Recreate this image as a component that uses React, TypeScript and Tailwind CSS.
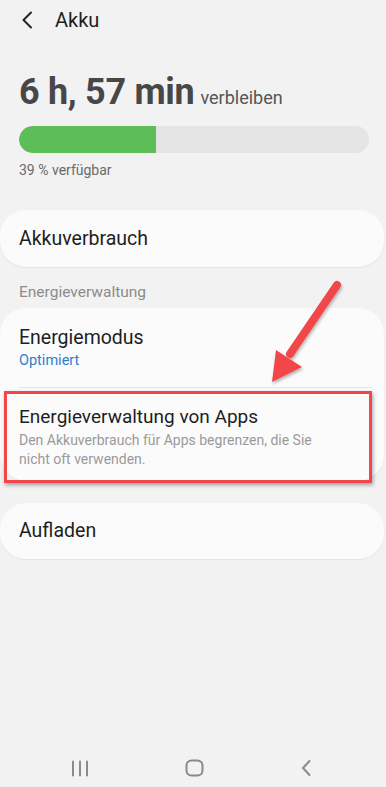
import React from 'react';

const font = { fontFamily: 'Roboto, "Noto Sans", sans-serif' };

export default function App() {
  return (
    <div className="relative w-[386px] h-[787px] bg-[#f2f2f2] overflow-hidden flex flex-col" style={font}>
      {/* header */}
      <div className="flex items-center h-[40px] pl-[21px]">
        <svg width="12" height="18" viewBox="0 0 12 18" className="text-[#222]">
          <path d="M10 1.5 L2.5 9 L10 16.5" fill="none" stroke="currentColor" strokeWidth="2" strokeLinecap="round" strokeLinejoin="round" />
        </svg>
        <span className="ml-[22px] text-[20px] leading-[28px] text-[#1e1e1e]">Akku</span>
      </div>

      {/* remaining time */}
      <div className="pl-[19px] pr-[17px] mt-[32px]">
        <div className="flex items-baseline">
          <span className="text-[36px] leading-[40px] font-bold text-[#474747] tracking-[-0.3px]">6 h, 57 min</span>
          <span className="ml-[6px] text-[18px] text-[#555]">verbleiben</span>
        </div>
        <div className="mt-[14px] h-[27px] rounded-full bg-[#e4e4e4] overflow-hidden">
          <div className="h-full bg-[#5dbd56] rounded-l-full" style={{ width: '39%' }} />
        </div>
        <div className="mt-[8px] text-[14px] leading-[18px] text-[#6a6a6a]">39 % verfügbar</div>
      </div>

      {/* Akkuverbrauch */}
      <div className="mt-[31px] mr-[2px] h-[57px] rounded-[26px] bg-[#fbfbfc] shadow-[0_1px_1px_rgba(0,0,0,0.06)] flex items-center px-[19px]">
        <span className="text-[19.5px] text-[#1e1e1e]">Akkuverbrauch</span>
      </div>

      <div className="mt-[15px] px-[19px] text-[15.5px] leading-[20px] text-[#8c8c8c]">Energieverwaltung</div>

      {/* Energie card */}
      <div className="mt-[6px] mr-[2px] rounded-[26px] bg-[#fbfbfc] shadow-[0_1px_1px_rgba(0,0,0,0.06)] flex flex-col">
        <div className="h-[79px] px-[19px] pt-[17px]">
          <div className="text-[19.5px] leading-[26px] text-[#1e1e1e]">Energiemodus</div>
          <div className="text-[14.5px] leading-[20px] text-[#2b80cf]">Optimiert</div>
        </div>
        <div className="ml-[19px] mr-[12px] h-px bg-[#e6e6e6]" />
        <div className="px-[19px] pt-[16px] pb-[12px]">
          <div className="text-[19px] leading-[26px] text-[#1e1e1e]">Energieverwaltung von Apps</div>
          <div className="mt-[1px] text-[14px] leading-[19px] text-[#9a9a9a] pr-[40px]">Den Akkuverbrauch für Apps begrenzen, die Sie nicht oft verwenden.</div>
        </div>
      </div>

      {/* Aufladen */}
      <div className="mt-[22px] mr-[2px] h-[56px] rounded-[26px] bg-[#fbfbfc] shadow-[0_1px_1px_rgba(0,0,0,0.06)] flex items-center px-[19px]">
        <span className="text-[19.5px] text-[#1e1e1e]">Aufladen</span>
      </div>

      {/* nav bar */}
      <div className="mt-auto h-[48px] mb-[-5px] flex items-center justify-between pl-[71px] pr-[74px]">
        <svg width="18" height="17" viewBox="0 0 18 17">
          <g stroke="#8a8a8a" strokeWidth="2" strokeLinecap="round">
            <path d="M2 1.5 V15.5" />
            <path d="M9 1.5 V15.5" />
            <path d="M16 1.5 V15.5" />
          </g>
        </svg>
        <svg width="19" height="18" viewBox="0 0 19 18">
          <rect x="1.5" y="1.5" width="16" height="15" rx="5" fill="none" stroke="#8a8a8a" strokeWidth="2" />
        </svg>
        <svg width="12" height="18" viewBox="0 0 12 18">
          <path d="M9.5 2 L3 9 L9.5 16" fill="none" stroke="#8a8a8a" strokeWidth="2" strokeLinecap="round" strokeLinejoin="round" />
        </svg>
      </div>

      {/* annotation: red box */}
      <div className="absolute left-[4px] top-[391px] w-[368px] h-[92px] border-[3px] border-[#f2474a] shadow-[1px_2px_4px_rgba(0,0,0,0.35)]" />

      {/* annotation: arrow */}
      <svg className="absolute left-0 top-0 pointer-events-none" width="386" height="787" viewBox="0 0 386 787">
        <defs>
          <filter id="sh" x="-20%" y="-20%" width="140%" height="140%">
            <feDropShadow dx="1" dy="2" stdDeviation="1.5" floodColor="#000" floodOpacity="0.3" />
          </filter>
        </defs>
        <g filter="url(#sh)" fill="#f2474a">
          <path d="M337 285 L290 354" stroke="#f2474a" strokeWidth="8" strokeLinecap="round" />
          <path d="M272 382 L276 350 L302 367 Z" />
        </g>
      </svg>
    </div>
  );
}
